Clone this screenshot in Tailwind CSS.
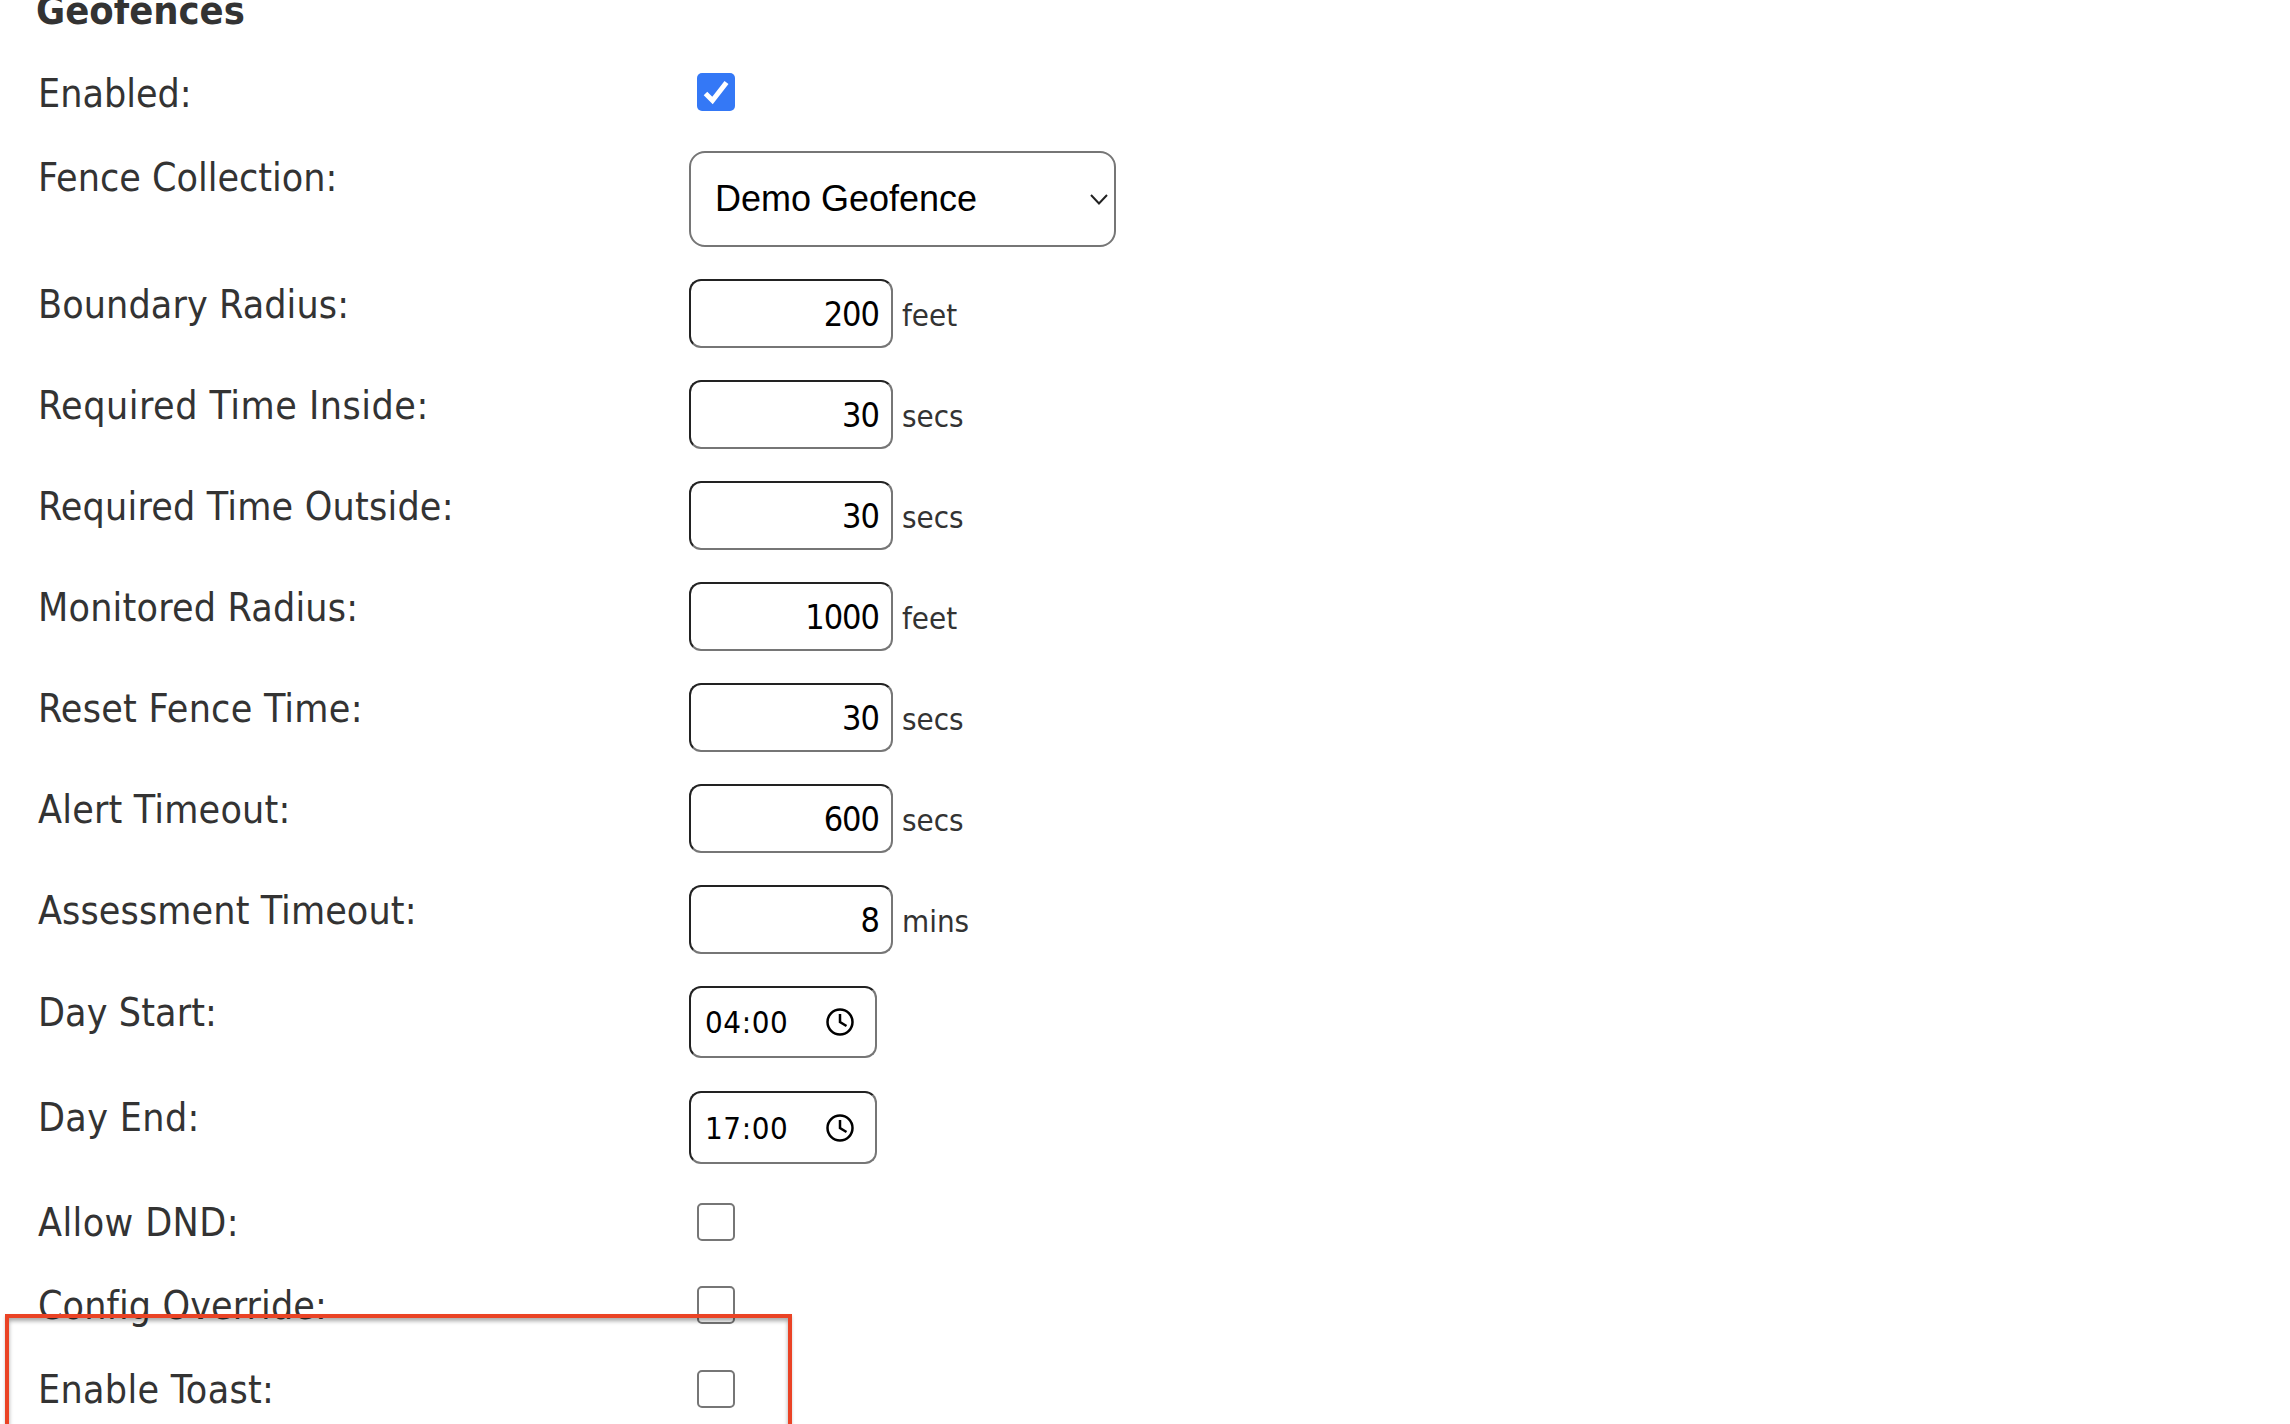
<!DOCTYPE html>
<html>
<head>
<script src="https://cdn.jsdelivr.net/npm/@tailwindcss/browser@4"></script>
</head>
<body class="bg-white">
<div class="relative h-[1424px] w-[2290px] overflow-hidden pl-[38px] font-['DejaVu_Sans_Condensed','DejaVu_Sans',sans-serif] text-[39px] leading-[46px] text-[#333]">
  <h2 class="-ml-[2px] -mt-[13px] h-[81px] text-[39.5px] font-bold">Geofences</h2>

  <div class="flex h-[83px]"><label class="mt-[3px] w-[651px]">Enabled:</label><span class="ml-[8px] mt-[5px] flex size-[38px] items-center justify-center rounded-[5px] bg-[#3478f6]"><svg width="38" height="38" viewBox="0 0 38 38"><path d="M8.5 20.5 L15.5 27.5 L29.5 9.5" fill="none" stroke="white" stroke-width="5"/></svg></span></div>

  <div class="mb-[32px] flex h-[96px]"><label class="mt-[4px] w-[651px]">Fence Collection:</label>
    <div class="flex h-[96px] w-[427px] items-center justify-between rounded-[16px] border-2 border-[#767676] pl-[24px] pr-[6px] font-['Liberation_Sans',sans-serif] text-[36px] text-black">Demo Geofence<svg width="18" height="11" viewBox="0 0 18 11"><path d="M1 1 L9 9.5 L17 1" fill="none" stroke="#222" stroke-width="2"/></svg></div>
  </div>

  <div class="mb-[32px] flex h-[69px]"><label class="mt-[3px] w-[651px] tracking-[0.1px]">Boundary Radius:</label><div class="flex h-[69px] w-[204px] items-center justify-end rounded-[12px] border-2 border-b-[#767676] border-l-[#222] border-r-[#767676] border-t-[#222] pr-[12px] text-[34px] tracking-[-1px] text-black">200</div><span class="ml-[9px] self-center pt-[2px] text-[31px]">feet</span></div>
  <div class="mb-[32px] flex h-[69px]"><label class="mt-[3px] w-[651px] tracking-[0.5px]">Required Time Inside:</label><div class="flex h-[69px] w-[204px] items-center justify-end rounded-[12px] border-2 border-b-[#767676] border-l-[#222] border-r-[#767676] border-t-[#222] pr-[12px] text-[34px] tracking-[-1px] text-black">30</div><span class="ml-[9px] self-center pt-[2px] text-[31px]">secs</span></div>
  <div class="mb-[32px] flex h-[69px]"><label class="mt-[3px] w-[651px] tracking-[0.2px]">Required Time Outside:</label><div class="flex h-[69px] w-[204px] items-center justify-end rounded-[12px] border-2 border-b-[#767676] border-l-[#222] border-r-[#767676] border-t-[#222] pr-[12px] text-[34px] tracking-[-1px] text-black">30</div><span class="ml-[9px] self-center pt-[2px] text-[31px]">secs</span></div>
  <div class="mb-[32px] flex h-[69px]"><label class="mt-[3px] w-[651px] tracking-[0.2px]">Monitored Radius:</label><div class="flex h-[69px] w-[204px] items-center justify-end rounded-[12px] border-2 border-b-[#767676] border-l-[#222] border-r-[#767676] border-t-[#222] pr-[12px] text-[34px] tracking-[-1px] text-black">1000</div><span class="ml-[9px] self-center pt-[2px] text-[31px]">feet</span></div>
  <div class="mb-[32px] flex h-[69px]"><label class="mt-[3px] w-[651px] tracking-[0.25px]">Reset Fence Time:</label><div class="flex h-[69px] w-[204px] items-center justify-end rounded-[12px] border-2 border-b-[#767676] border-l-[#222] border-r-[#767676] border-t-[#222] pr-[12px] text-[34px] tracking-[-1px] text-black">30</div><span class="ml-[9px] self-center pt-[2px] text-[31px]">secs</span></div>
  <div class="mb-[32px] flex h-[69px]"><label class="mt-[3px] w-[651px] tracking-[0.2px]">Alert Timeout:</label><div class="flex h-[69px] w-[204px] items-center justify-end rounded-[12px] border-2 border-b-[#767676] border-l-[#222] border-r-[#767676] border-t-[#222] pr-[12px] text-[34px] tracking-[-1px] text-black">600</div><span class="ml-[9px] self-center pt-[2px] text-[31px]">secs</span></div>
  <div class="mb-[32px] flex h-[69px]"><label class="mt-[3px] w-[651px] tracking-[0.1px]">Assessment Timeout:</label><div class="flex h-[69px] w-[204px] items-center justify-end rounded-[12px] border-2 border-b-[#767676] border-l-[#222] border-r-[#767676] border-t-[#222] pr-[12px] text-[34px] tracking-[-1px] text-black">8</div><span class="ml-[9px] self-center pt-[2px] text-[31px]">mins</span></div>

  <div class="mb-[33px] flex h-[72px]"><label class="mt-[4px] w-[651px] tracking-[0.1px]">Day Start:</label><div class="flex h-[72px] w-[188px] items-center justify-between rounded-[12px] border-2 border-b-[#767676] border-l-[#222] border-r-[#767676] border-t-[#222] pl-[14px] pr-[20px] text-[31px] tracking-[0.6px] text-black"><span>04:00</span><svg width="30" height="30" viewBox="0 0 30 30"><circle cx="15" cy="15" r="12.5" fill="none" stroke="#000" stroke-width="2.5"/><path d="M15 7 V15 L21.5 19" fill="none" stroke="#000" stroke-width="2.5"/></svg></div></div>
  <div class="mb-[33px] flex h-[73px]"><label class="mt-[4px] w-[651px] tracking-[0.35px]">Day End:</label><div class="flex h-[73px] w-[188px] items-center justify-between rounded-[12px] border-2 border-b-[#767676] border-l-[#222] border-r-[#767676] border-t-[#222] pl-[14px] pr-[20px] text-[31px] tracking-[0.6px] text-black"><span>17:00</span><svg width="30" height="30" viewBox="0 0 30 30"><circle cx="15" cy="15" r="12.5" fill="none" stroke="#000" stroke-width="2.5"/><path d="M15 7 V15 L21.5 19" fill="none" stroke="#000" stroke-width="2.5"/></svg></div></div>

  <div class="flex h-[83px]"><label class="mt-[3px] w-[651px] tracking-[0.4px]">Allow DND:</label><span class="ml-[8px] mt-[6px] size-[38px] rounded-[5px] border-2 border-[#767676] bg-white"></span></div>
  <div class="flex h-[84px]"><label class="mt-[3px] w-[651px] tracking-[0.1px]">Config Override:</label><span class="ml-[8px] mt-[6px] size-[38px] rounded-[5px] border-2 border-[#767676] bg-white"></span></div>
  <div class="flex h-[84px]"><label class="mt-[3px] w-[651px] tracking-[0.3px]">Enable Toast:</label><span class="ml-[8px] mt-[6px] size-[38px] rounded-[5px] border-2 border-[#767676] bg-white"></span></div>

  <div class="absolute left-[5px] top-[1314px] h-[200px] w-[787px] border-4 border-[#ea4325] shadow-[inset_0_3px_4px_rgba(0,0,0,0.35),0_2px_3px_rgba(0,0,0,0.2)]"></div>
</div>
</body>
</html>
